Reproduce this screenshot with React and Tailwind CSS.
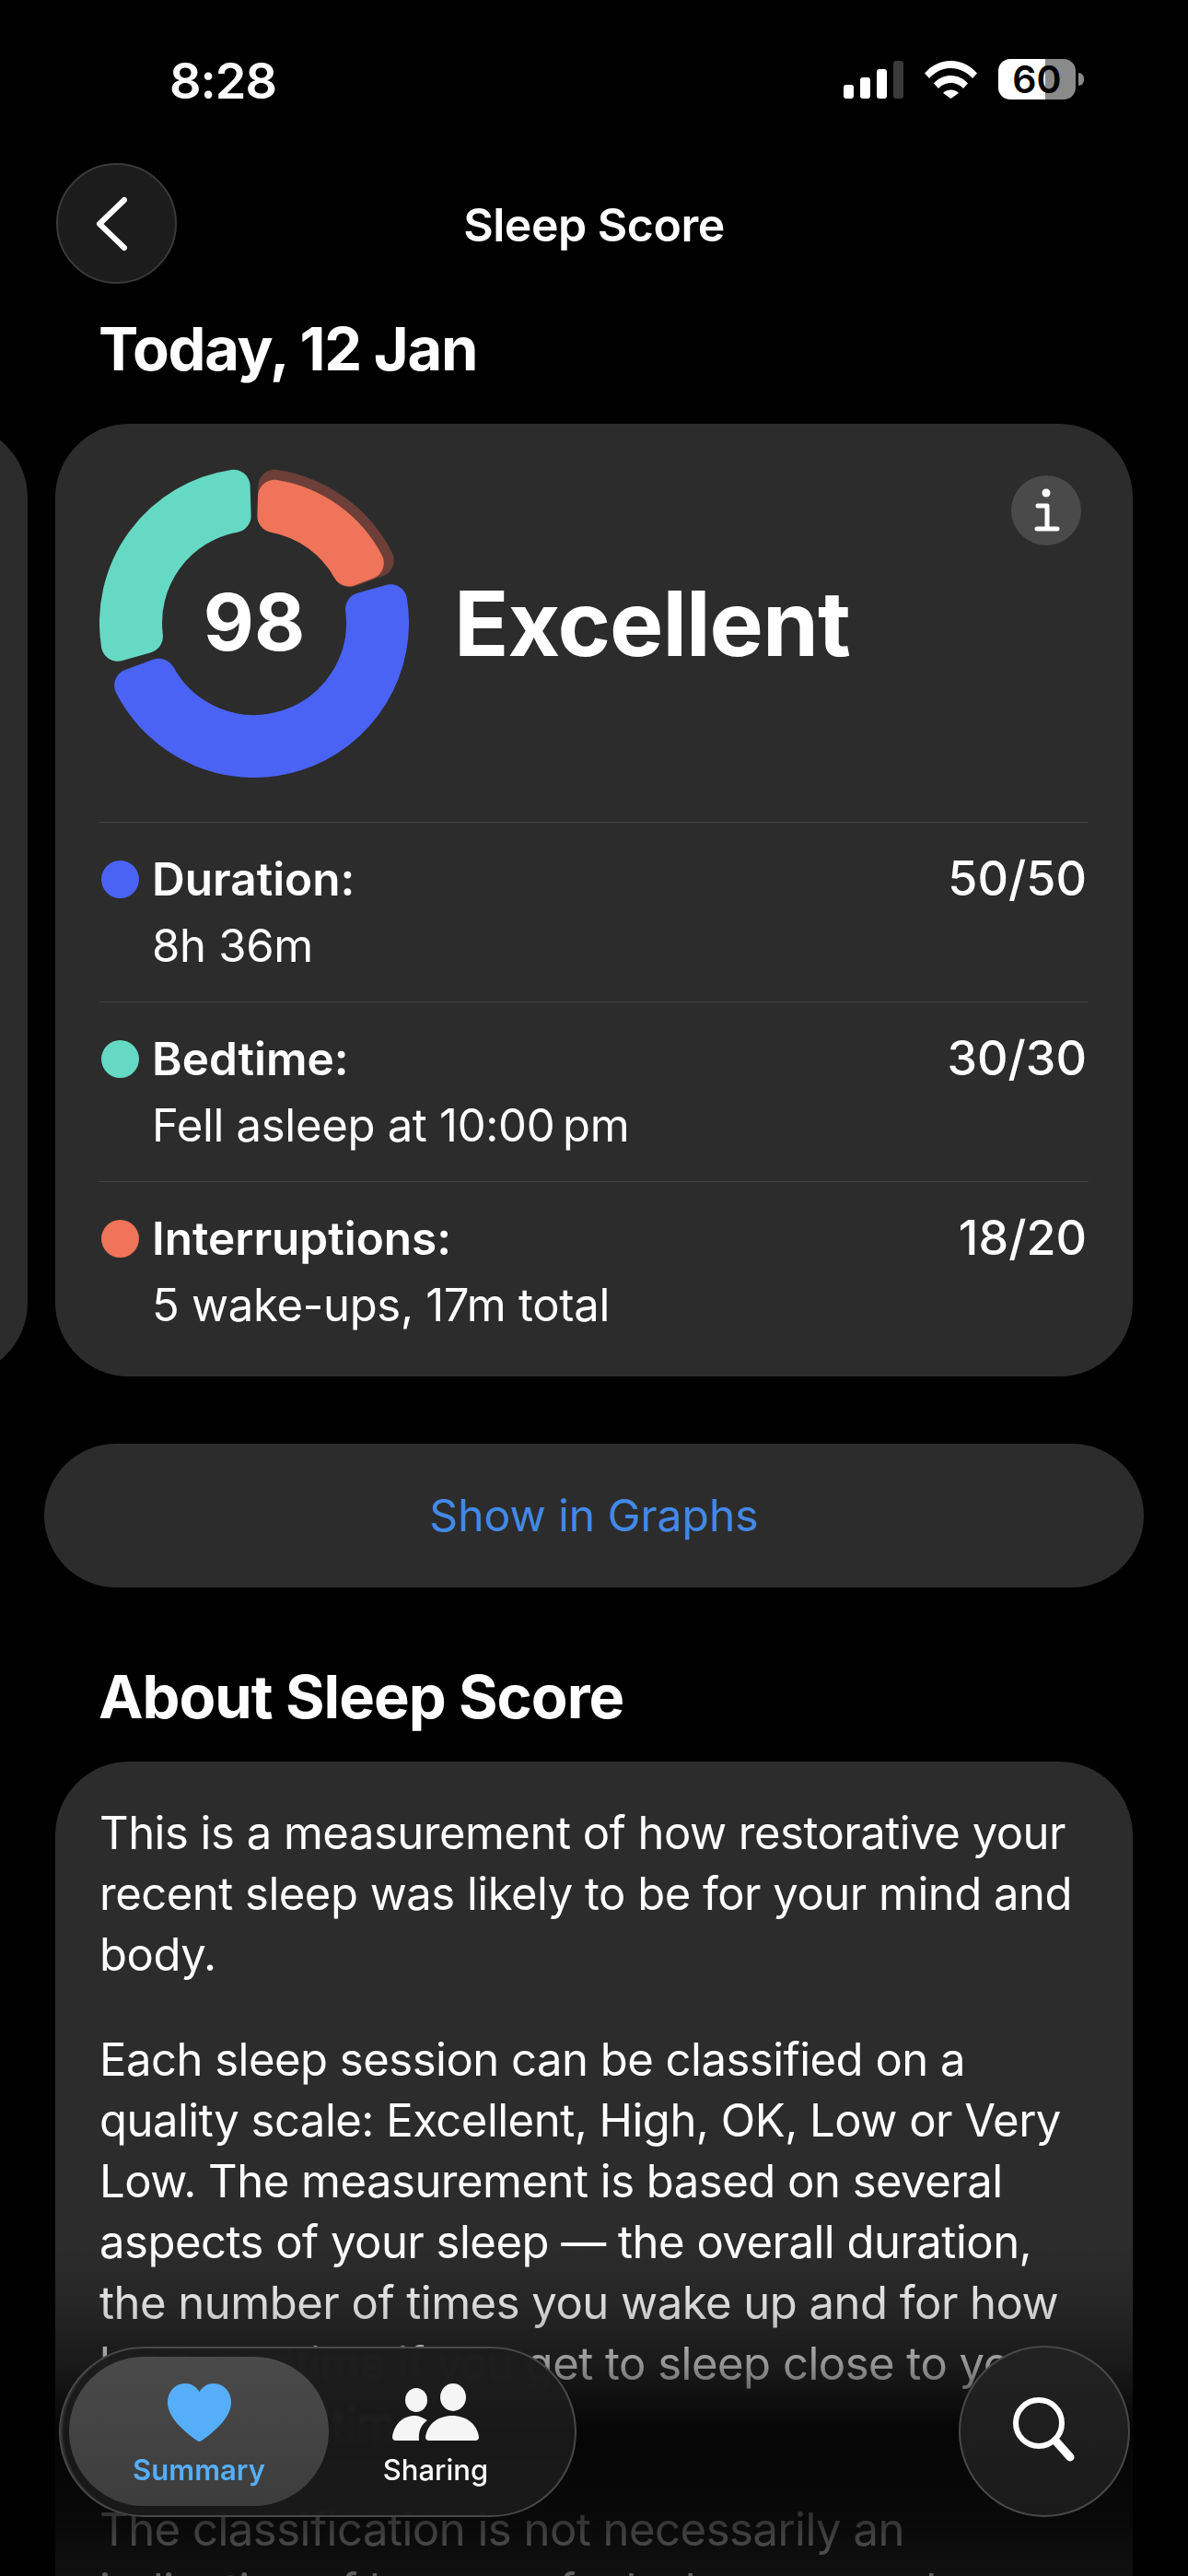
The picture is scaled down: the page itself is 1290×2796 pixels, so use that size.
import React from 'react';

const polar = (r, deg) => {
  const rad = (deg * Math.PI) / 180;
  return `${(168 + r * Math.sin(rad)).toFixed(2)} ${(168 - r * Math.cos(rad)).toFixed(2)}`;
};

// ring segment with parallel ends, inset by c so a round stroke gives the soft corners
const segment = (ri, ro, a0, a1, c = 18) => {
  const outer = ro - c;
  const inner = ri + c;
  const da = (r) => ((c / r) * 180) / Math.PI;
  return [
    `M${polar(outer, a0 + da(outer))}`,
    `A${outer} ${outer} 0 0 1 ${polar(outer, a1 - da(outer))}`,
    `L${polar(inner, a1 - da(inner))}`,
    `A${inner} ${inner} 0 0 0 ${polar(inner, a0 + da(inner))}`,
    'Z',
  ].join(' ');
};

const RingPart = ({ d, color }) => (
  <path d={d} fill={color} stroke={color} strokeWidth="36" strokeLinejoin="round" />
);

const ScoreRing = () => (
  <div className="relative w-[336px] h-[336px] shrink-0">
    <svg viewBox="0 0 336 336" className="w-full h-full">
      <RingPart d={segment(100, 168, 74, 250)} color="#4a63f5" />
      <RingPart d={segment(100, 168, 254, 358.3)} color="#65d9c3" />
      <RingPart d={segment(100, 168, 1.7, 70)} color="#6d3f38" />
      <RingPart d={segment(100, 157, 1.7, 69.5)} color="#ef7459" />
    </svg>
    <div className="absolute inset-0 flex items-center justify-center text-[85px] font-bold text-white">98</div>
  </div>
);

const StatusBar = () => (
  <div className="h-[177px] flex items-start justify-between pl-[184px] pr-[113px] pt-[56px]">
    <span className="text-[54px] leading-[64px] font-semibold text-white tracking-[-1px]">8:28</span>
    <div className="flex items-start pt-[8px]">
      <div className="flex items-end gap-[7px] h-[41px] mt-[2px]">
        <div className="w-[11px] h-[15px] rounded-[3px] bg-white" />
        <div className="w-[11px] h-[23px] rounded-[3px] bg-white" />
        <div className="w-[11px] h-[32px] rounded-[3px] bg-white" />
        <div className="w-[11px] h-[41px] rounded-[3px] bg-[#3a3a3a]" />
      </div>
      <svg viewBox="0 0 57 41" className="w-[57px] h-[41px] ml-[23px] mt-[2px]">
        <path d="M0 13.5C7.5 5 17.5 0 28.5 0S49.5 5 57 13.5L52 19C45.5 12 37.5 8 28.5 8S11.5 12 5 19Z" fill="#fff" />
        <path d="M10 24.5C14.5 19.5 21 16 28.5 16S42.5 19.5 47 24.5L42 30C38.5 26.5 34 24 28.5 24S18.5 26.5 15 30Z" fill="#fff" />
        <path d="M20 35C22 32.8 25 31.5 28.5 31.5S35 32.8 37 35L28.5 41Z" fill="#fff" />
      </svg>
      <div className="w-[84px] h-[44px] ml-[23px] rounded-[13px] bg-[linear-gradient(to_right,#fff_61%,#8a8a8a_61%)] flex items-center justify-center text-[41px] leading-[44px] font-semibold text-black">
        60
      </div>
      <div className="w-[6px] h-[14px] ml-[3px] mt-[15px] rounded-r-full bg-[#8a8a8a]" />
    </div>
  </div>
);

const rows = [
  { label: 'Duration:', value: '8h 36m', score: '50/50', dot: 'bg-[#4a63f5]' },
  { label: 'Bedtime:', value: 'Fell asleep at 10:00\u202fpm', score: '30/30', dot: 'bg-[#65d9c3]' },
  { label: 'Interruptions:', value: '5 wake-ups, 17m total', score: '18/20', dot: 'bg-[#ef7459]' },
];

const ScoreRow = ({ label, value, score, dot }) => (
  <div className="h-[195px] border-t-[1.5px] border-[#444444] pt-[25px]">
    <div className="flex items-center h-[72px] pl-[2px] pr-[2px]">
      <div className={`w-[41px] h-[41px] rounded-full ${dot}`} />
      <span className="ml-[14px] text-[49.5px] leading-[72px] font-semibold text-white">{label}</span>
      <span className="ml-auto text-[52px] leading-[72px] font-medium text-white">{score}</span>
    </div>
    <div className="mt-[1px] pl-[57px] text-[49px] leading-[72px] text-white tracking-[-0.3px]">{value}</div>
  </div>
);

const about = [
  [
    'This is a measurement of how restorative your',
    'recent sleep was likely to be for your mind and',
    'body.',
  ],
  [
    'Each sleep session can be classified on a',
    'quality scale: Excellent, High, OK, Low or Very',
    'Low. The measurement is based on several',
    'aspects of your sleep — the overall duration,',
    'the number of times you wake up and for how',
    'long, bedtime if you get to sleep close to your',
    'typical bedtime.',
  ],
  [
    'The classification is not necessarily an',
    'indication of how you feel when you wake up,',
  ],
];

const HeartIcon = () => (
  <svg viewBox="0 0 69 63" className="w-[69px] h-[63px]">
    <path d="M34.5 9C30.5 3 25.5 0 19.5 0 8.5 0 0 8.5 0 20.5 0 36 16 51 32 62c1.6 1.2 3.4 1.2 5 0C53 51 69 36 69 20.5 69 8.5 60.5 0 49.5 0 43.5 0 38.5 3 34.5 9Z" fill="#56aef8" />
  </svg>
);

const PeopleIcon = () => (
  <svg viewBox="0 0 94 62" className="w-[94px] h-[62px]" fill="#f5f5f5">
    <ellipse cx="26" cy="18" rx="12" ry="13" />
    <ellipse cx="66" cy="15" rx="14" ry="15" />
    <path d="M40 62H90Q94 62 94 58C92 44 80 35 65 35C50 35 38 44 36 58Q36 62 40 62Z" />
    <path d="M4 62H29C28 52 31 45 38 40C33 37 29 35 24 35C12 35 2 44 0 58Q0 62 4 62Z" />
  </svg>
);

const TabBar = () => (
  <div className="absolute left-[64px] right-[63px] bottom-[64px] flex items-center justify-between">
    <div className="w-[562px] h-[185px] rounded-full border-[2px] border-[#484848] bg-[linear-gradient(to_bottom,rgba(28,28,28,0.98)_25%,rgba(28,28,28,0.85)_38%)] backdrop-blur-[2px] flex items-center pl-[9px] shadow-[inset_4px_0_2px_-2px_#333333]">
      <div className="w-[282px] h-[162px] rounded-full bg-gradient-to-b from-[#4a4a4a] to-[#3d3d3d] flex flex-col items-center pt-[29px]">
        <HeartIcon />
        <span className="mt-[13px] text-[31px] leading-[36px] font-semibold text-[#56aef8]">Summary</span>
      </div>
      <div className="w-[232px] h-[162px] flex flex-col items-center pt-[29px]">
        <PeopleIcon />
        <span className="mt-[14px] text-[31px] leading-[36px] font-medium text-white">Sharing</span>
      </div>
    </div>
    <div className="w-[186px] h-[186px] rounded-full border-[2px] border-[#484848] bg-gradient-to-b from-[#222222] to-[#1a1a1a] flex items-center justify-center">
      <svg viewBox="0 0 72 76" className="w-[72px] h-[76px] ml-[2px]" fill="none" stroke="#fff" strokeLinecap="round">
        <circle cx="29" cy="29" r="25" strokeWidth="6" />
        <path d="M47 48L63 66" strokeWidth="9" />
      </svg>
    </div>
  </div>
);

export default function App() {
  return (
    <div className="relative w-[1290px] h-[2796px] overflow-hidden bg-black text-white [font-family:Inter,sans-serif]">
      <StatusBar />

      {/* Nav */}
      <div className="relative h-[131px] flex items-center justify-center">
        <button className="absolute left-[61px] top-0 w-[131px] h-[131px] rounded-full bg-[#1c1c1c] border-[2px] border-[#3a3a3a] flex items-center justify-center">
          <svg viewBox="0 0 36 60" className="w-[36px] h-[60px] mr-[12px]" fill="none" stroke="#fff" strokeWidth="6" strokeLinecap="round" strokeLinejoin="round">
            <path d="M32 4L5 30L32 56" />
          </svg>
        </button>
        <h1 className="mt-[3px] text-[50px] font-semibold tracking-[-0.5px]">Sleep Score</h1>
      </div>

      <h2 className="pl-[107px] mt-[31px] text-[65px] leading-[80px] font-bold tracking-[-1.3px]">Today, 12 Jan</h2>

      {/* Cards row, previous day peeks in on the left */}
      <div className="flex gap-[30px] ml-[-1140px] mt-[41px]">
        <div className="w-[1170px] h-[1034px] shrink-0 rounded-[80px] bg-[#2c2c2c]" />
        <div className="w-[1170px] h-[1034px] shrink-0 rounded-[80px] bg-[#2c2c2c] px-[48px] pt-[48px]">
          <div className="flex items-center h-[336px] mb-[48px]">
            <ScoreRing />
            <span className="ml-[49px] text-[98px] font-bold tracking-[-1px]">Excellent</span>
            <div className="ml-auto mr-[8px] self-start mt-[8px] w-[76px] h-[76px] rounded-full bg-[#4a4a4a] flex items-center justify-center">
              <svg viewBox="0 0 30 48" className="w-[30px] h-[48px]" fill="none" stroke="#fff" strokeWidth="5" strokeLinecap="round" strokeLinejoin="round">
                <circle cx="15" cy="5" r="4.5" fill="#fff" stroke="none" />
                <path d="M6 19H16V44M5 44H27" />
              </svg>
            </div>
          </div>
          {rows.map((row) => (
            <ScoreRow key={row.label} {...row} />
          ))}
        </div>
      </div>

      <button className="block w-[1194px] h-[156px] ml-[48px] mt-[73px] rounded-full bg-[#2c2c2c] text-[48px] text-[#4389e6]">
        Show in Graphs
      </button>

      <h2 className="pl-[107px] mt-[79px] text-[65px] leading-[80px] font-bold tracking-[-1px]">About Sleep Score</h2>

      <div className="w-[1170px] ml-[60px] mt-[30px] rounded-t-[80px] bg-[#2c2c2c] px-[48px] pt-[45px] h-[1000px]">
        {about.map((para, i) => (
          <p key={i} className={i > 0 ? 'mt-[48px]' : ''}>
            {para.map((line) => (
              <span key={line} className="block whitespace-nowrap text-[49px] leading-[66px] tracking-[-0.5px]">{line}</span>
            ))}
          </p>
        ))}
      </div>

      {/* Fade behind the floating tab bar */}
      <div className="absolute left-0 right-0 bottom-0 h-[396px] bg-[linear-gradient(to_bottom,rgba(0,0,0,0)_10%,rgba(0,0,0,0.14)_25%,rgba(0,0,0,0.42)_42%,rgba(0,0,0,0.88)_60%,rgba(0,0,0,0.8)_85%,rgba(0,0,0,0.62)_100%)]" />

      <TabBar />
    </div>
  );
}
